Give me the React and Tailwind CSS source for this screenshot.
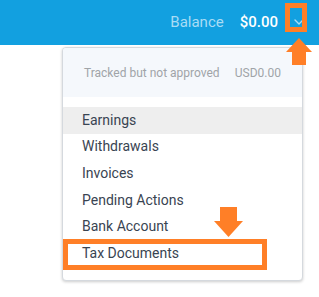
import React from 'react';

const items = ['Earnings', 'Withdrawals', 'Invoices', 'Pending Actions', 'Bank Account', 'Tax Documents'];

const App = () => {
  return (
    <div className="relative w-[319px] h-[297px] bg-white overflow-hidden" style={{ fontFamily: 'Roboto, "Liberation Sans", sans-serif' }}>
      {/* header */}
      <div className="h-[45px] bg-[#12a0e0] flex items-center justify-end pr-[12px]">
        <span className="text-[15px] text-[#a9dcf5] mr-[16px]">Balance</span>
        <span className="text-[15px] font-medium text-white mr-[7px]">$0.00</span>
        <div className="w-[22px] h-[29px] flex items-center justify-center pl-[5px] mb-[1px]">
          <svg width="10" height="6" viewBox="0 0 10 6" fill="none" stroke="#a9dcf5">
            <path strokeLinecap="round" strokeLinejoin="round" strokeWidth={1.4} d="M1 1l4 4 4-4" />
          </svg>
        </div>
      </div>

      {/* dropdown */}
      <div className="absolute left-[62px] top-[47px] w-[241px] h-[234px] bg-white border border-[#d5d9de] rounded-[4px] shadow-[0_1px_3px_rgba(0,0,0,0.2)] overflow-hidden">
        <div className="h-[49px] bg-[#f5f8fc] flex items-center justify-between pl-[21px] pr-[21px]">
          <span className="text-[12px] text-[#a0a4a8]">Tracked but not approved</span>
          <span className="text-[12px] text-[#a0a4a8]">USD0.00</span>
        </div>
        <div className="pt-[10px]">
          {items.map((item, i) => (
            <div
              key={item}
              className={`h-[26.6px] flex items-center pl-[19px] text-[14px] text-[#394452] ${i === 0 ? 'bg-[#eeeeee]' : ''}`}
            >
              {item}
            </div>
          ))}
        </div>
      </div>

      {/* highlight box around chevron */}
      <div className="absolute left-[285px] top-[3px] w-[22px] h-[29px] border-[5px] border-[#ff7f27]"></div>

      {/* up arrow */}
      <svg className="absolute left-[286px] top-[38px]" width="26" height="27" viewBox="0 0 26 27">
        <polygon points="13,0 26,14 20,14 20,27 6,27 6,14 0,14" fill="#ff7f27" />
      </svg>

      {/* highlight box around Tax Documents */}
      <div className="absolute left-[63px] top-[239px] w-[204px] h-[31px] border-[5px] border-[#ff7f27]"></div>

      {/* down arrow */}
      <svg className="absolute left-[214px] top-[207px]" width="29" height="30" viewBox="0 0 29 30">
        <polygon points="6,0 23,0 23,14 29,14 14.5,30 0,14 6,14" fill="#ff7f27" />
      </svg>
    </div>
  );
};

export default App;
